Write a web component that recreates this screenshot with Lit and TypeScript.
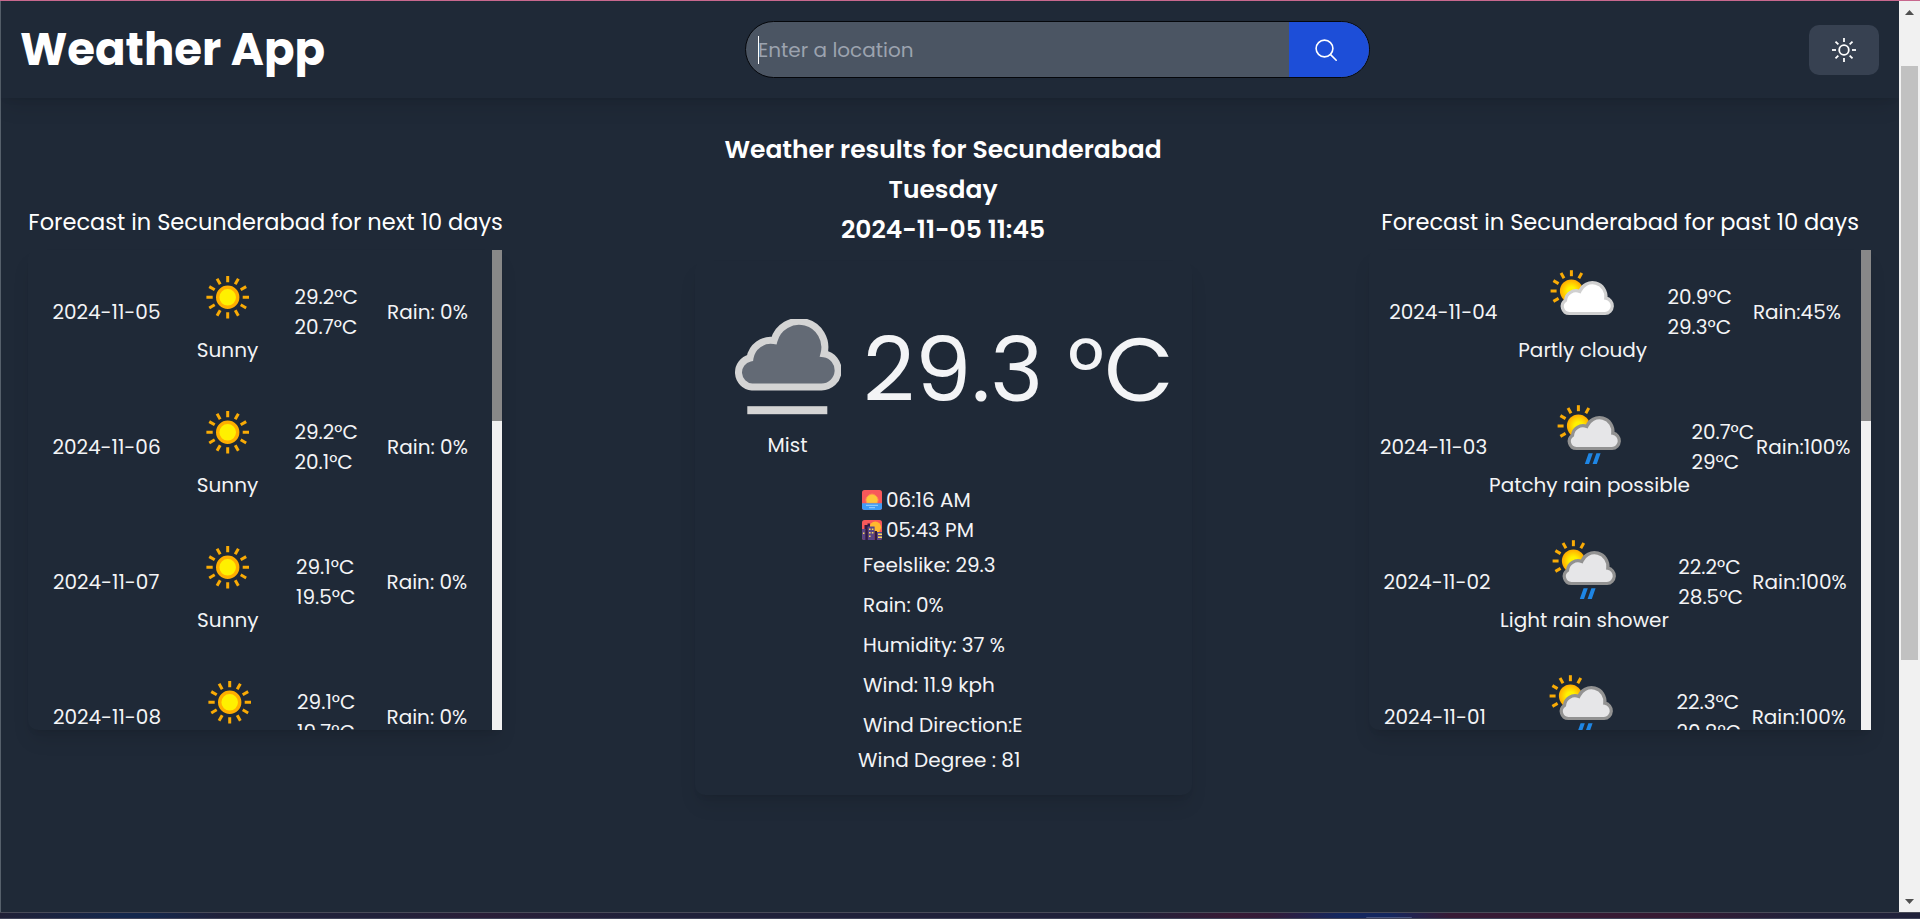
import { LitElement, html, svg, css } from "lit";
import { customElement, property } from "lit/decorators.js";
import { styleMap } from "lit/directives/style-map.js";

interface Day {
  date: string; icon: "sun" | "partly" | "shower"; cond: string; hi: string; lo: string; rain: string;
  x: [number, number, number, number];
}

const NEXT: Day[] = [
  { date: "2024-11-05", icon: "sun", cond: "Sunny", hi: "29.2°C", lo: "20.7°C", rain: "Rain: 0%", x: [24.7, 199.5, 266.8, 359.4] },
  { date: "2024-11-06", icon: "sun", cond: "Sunny", hi: "29.2°C", lo: "20.1°C", rain: "Rain: 0%", x: [24.7, 199.5, 266.8, 359.4] },
  { date: "2024-11-07", icon: "sun", cond: "Sunny", hi: "29.1°C", lo: "19.5°C", rain: "Rain: 0%", x: [25.2, 199.8, 268.3, 358.8] },
  { date: "2024-11-08", icon: "sun", cond: "Sunny", hi: "29.1°C", lo: "19.7°C", rain: "Rain: 0%", x: [25.2, 201.8, 269.4, 358.8] },
];

const PAST: Day[] = [
  { date: "2024-11-04", icon: "partly", cond: "Partly cloudy", hi: "20.9°C", lo: "29.3°C", rain: "Rain:45%", x: [20.6, 213.7, 298.7, 384.2] },
  { date: "2024-11-03", icon: "shower", cond: "Patchy rain possible", hi: "20.7°C", lo: "29°C", rain: "Rain:100%", x: [11.2, 220.5, 322.7, 387.4] },
  { date: "2024-11-02", icon: "shower", cond: "Light rain shower", hi: "22.2°C", lo: "28.5°C", rain: "Rain:100%", x: [14.8, 215.5, 309.6, 383.6] },
  { date: "2024-11-01", icon: "shower", cond: "Light rain shower", hi: "22.3°C", lo: "20.8°C", rain: "Rain:100%", x: [15.3, 212.5, 307.8, 383] },
];

const rays = (cx: number, cy: number, from: number, to: number, angles: number[]) =>
  angles.map((a) => svg`<line x1=${cx} y1=${cy - from} x2=${cx} y2=${cy - to} transform="rotate(${a} ${cx} ${cy})" stroke="#f9ab06" stroke-width="3"/>`);

const CLOUD = "M26.3 56.5A7.2 7.2 0 0 1 22.5 43.3A10.5 10.5 0 0 1 36.8 34.5A13.5 13.5 0 0 1 62.8 41.2A7.7 7.7 0 0 1 62 56.5Z";

const icons = {
  sun: () => html`<svg class="ico" viewBox="0 0 80 80">
    ${rays(39.7, 40.3, 15, 21.3, [0, 30, 60, 90, 120, 150, 180, 210, 240, 270, 300, 330])}
    <circle cx="39.7" cy="40.3" r="10" fill="#fff000" stroke="#ffae00" stroke-width="3.4"/></svg>`,
  cloudy: (fill: string, stroke: string, drops: boolean) => html`<svg class="ico" viewBox="0 0 80 80">
    <defs><radialGradient id="g"><stop offset=".35" stop-color="#fff200"/><stop offset="1" stop-color="#ffab00"/></radialGradient></defs>
    ${rays(28.4, 34, 14.8, 20.8, [-120, -90, -60, -30, 0, 30])}
    <circle cx="28.4" cy="34" r="11.5" fill="url(#g)"/>
    <path d=${CLOUD} fill=${fill} stroke=${stroke} stroke-width="3.2"/>
    ${drops ? svg`<path d="M38.6 61.3h4.2l-3.8 10.7h-4.2zM46.4 61.3h4.2l-3.8 10.7h-4.2z" fill="#1e86e5"/>` : ""}</svg>`,
};

const condIcon = (k: Day["icon"]) =>
  k === "sun" ? icons.sun() : k === "partly" ? icons.cloudy("#fff", "#d0d0d0", false) : icons.cloudy("#e6e6e8", "#929292", true);

@customElement("forecast-list")
class ForecastList extends LitElement {
  @property() heading = "";
  @property({ attribute: false }) days: Day[] = [];
  @property({ type: Number }) indent = 0;

  static styles = css`
    :host { display: flex; flex: none; flex-direction: column; color: #f3f4f6; white-space: nowrap; }
    .head { font-size: 22.5px; line-height: 35px; height: 45px; color: #fff; }
    .box { display: flex; height: 480px; overflow: hidden; border-radius: 10px 0 0 10px;
      box-shadow: 0 12.5px 18.75px -3.75px rgba(0,0,0,.1), 0 5px 7.5px -5px rgba(0,0,0,.1); }
    .rows { flex: 1; overflow: hidden; display: flex; flex-direction: column; gap: 10px; }
    .row { flex: none; height: 125px; display: grid; align-items: center; }
    .row > * { grid-row: 1; grid-column: 1; padding-bottom: 2px; }
    .cond { align-self: start; justify-self: start; width: 0; display: flex; flex-direction: column; align-items: center; padding-top: 7px; }
    .ico { display: block; flex: none; width: 80px; height: 80px; margin-bottom: -2px; }
    .bar { width: 10px; background: #f1f1f1; }
    .thumb { height: 171px; background: #888; }
  `;

  render() {
    const at = (x: number) => styleMap({ marginLeft: x - 0.3 + "px" });
    const centre = (x: number) => styleMap({ marginLeft: x + "px" });
    return html`
      <div class="head" style=${at(this.indent)}>${this.heading}</div>
      <div class="box">
        <div class="rows">
          ${this.days.map((d) => html`<div class="row">
            <div style=${at(d.x[0])}>${d.date}</div>
            <div class="cond" style=${centre(d.x[1])}>${condIcon(d.icon)}<span>${d.cond}</span></div>
            <div style=${at(d.x[2])}>${d.hi}<br>${d.lo}</div>
            <div style=${at(d.x[3])}>${d.rain}</div>
          </div>`)}
        </div>
        <div class="bar"><div class="thumb"></div></div>
      </div>`;
  }
}

@customElement("app-root")
class AppRoot extends LitElement {
  static styles = css`
    * { box-sizing: border-box; }
    :host { box-sizing: border-box; display: flex; flex-direction: column; width: 1920px; height: 919px; overflow: hidden; background: #1f2937; color: #fff; white-space: nowrap;
      font: 400 20px/30px Poppins, Inter, "Open Sans", sans-serif; border-top: 1px solid #c8688e; }
    .view { flex: 1; display: flex; min-height: 0; }
    .page { flex: 1; border-left: 1px solid #56606b; }
    header { height: 97px; display: flex; align-items: center; padding: 0 20px 0 19px; box-shadow: 0 12.5px 18.75px -3.75px rgba(0,0,0,.1), 0 5px 7.5px -5px rgba(0,0,0,.1); }
    h1 { margin: 0; flex: 1; font-size: 45px; line-height: 50px; font-weight: 700; }
    .search { width: 625px; height: 57px; display: flex; border: 1px solid #05070b; border-radius: 29px; overflow: hidden; background: #4b5563; margin-right: 439px; }
    .field { flex: 1; display: flex; align-items: center; padding-left: 12px; color: #9ca3af; }
    .field span { padding-top: 1px; margin-left: -1px; }
    .caret { width: 1px; height: 28px; background: #fff; }
    .go { width: 80px; background: #1d4ed8; display: grid; place-items: center; padding-right: 6px; }
    .mode { width: 70px; height: 50px; border-radius: 10px; background: #374151; display: grid; place-items: center; }
    svg { display: block; flex: none; }
    main { display: flex; align-items: flex-start; padding: 107px 28px 0 27px; }
    .next { width: 474px; }
    .past { width: 502px; margin-left: auto; }
    .now { display: flex; flex-direction: column; margin-top: -75px; margin-left: 192.5px; width: 497px; }
    .title { text-align: center; font-size: 25px; line-height: 40px; font-weight: 600; }
    .card { height: 534px; margin-top: 11px; border-radius: 10px; padding: 47px 0 0 39.5px;
      box-shadow: 0 12.5px 18.75px -3.75px rgba(0,0,0,.1), 0 5px 7.5px -5px rgba(0,0,0,.1); color: #f3f4f6; }
    .top { display: flex; height: 177px; }
    .mist { width: 107px; display: flex; flex-direction: column; align-items: center; padding-top: 11px; gap: 15px; }
    .big { font-size: 90px; line-height: 100px; margin: 12px 0 0 22px; }
    .facts { padding-left: 129px; }
    .sun { display: flex; align-items: center; gap: 4px; margin-left: -1px; height: 30px; }
    .fact { height: 40px; padding-top: 5px; }
    .last { margin-left: -5px; }
    .sb { width: 21px; background: #f1f1f1; display: flex; flex-direction: column; align-items: center; }
    .arrow { width: 21px; height: 21px; }
    .track { flex: 1; width: 17px; padding-top: 44px; }
    .thumb { height: 594px; background: #c1c1c1; }
    .strip { height: 7px; border-top: 1px solid #494b58; border-bottom: 1px solid #42455a; background: linear-gradient(90deg, #202036 0, #14274c 120px, #14274c 150px, #20213a 220px, #21213a 380px, #2a1e38 480px, #20213a 640px, #20213a 1130px, #381a35 1230px, #331b38 1270px, #14275e 1340px, #14275e 1390px, #371a35 1450px, #371a33 1680px, #20213a 1800px, #20213a 1920px); display: flex; align-items: flex-end; }
    .tab { width: 46px; height: 1px; margin-left: 1366px; background: #4b5680; border-radius: 2px 2px 0 0; }
  `;

  render() {
    return html`
      <div class="view">
        <div class="page">
          <header>
            <h1>Weather App</h1>
            <div class="search">
              <div class="field"><div class="caret"></div><span>Enter a location</span></div>
              <div class="go"><svg width="24" height="24" viewBox="0 0 24 24" fill="none" stroke="#fff" stroke-width="1.6" stroke-linecap="round"><circle cx="10.5" cy="10.5" r="8.4"/><path d="M16.6 16.6L22.2 22.2"/></svg></div>
            </div>
            <div class="mode"><svg width="26" height="26" viewBox="0 0 26 26" fill="none" stroke="#fff" stroke-width="1.8"><circle cx="13" cy="13" r="4.8"/>${[0, 45, 90, 135, 180, 225, 270, 315].map((a) => svg`<line x1="13" y1="1" x2="13" y2="5" transform="rotate(${a} 13 13)"/>`)}</svg></div>
          </header>
          <main>
            <forecast-list class="next" .indent=${0.6} .heading=${"Forecast in Secunderabad for next 10 days"} .days=${NEXT}></forecast-list>
            <section class="now">
              <div class="title">
                <div>Weather results for Secunderabad</div>
                <div>Tuesday</div>
                <div>2024-11-05 11:45</div>
              </div>
              <div class="card">
                <div class="top">
                  <div class="mist">
                    <svg width="107" height="96" viewBox="0 0 107 96"><path d="M18 68A14.7 14.7 0 0 1 16 39A21 21 0 0 1 40 21.6A25.6 25.6 0 0 1 90 34.8A16.7 16.7 0 0 1 87.5 68Z" fill="#636a75" stroke="#d4d4d4" stroke-width="7"/><rect x="13.3" y="87.2" width="80" height="8" fill="#d4d4d4"/></svg>
                    <span>Mist</span>
                  </div>
                  <div class="big">29.3 °C</div>
                </div>
                <div class="facts">
                  <div class="sun"><svg width="20" height="20" viewBox="0 0 20 20"><rect width="20" height="20" rx="2.5" fill="#f8595a"/><path d="M5 13.3a5.900 5.900 0 1 1 10 0z" fill="#fdc73a" stroke="#ff8c50" stroke-width="1"/><path d="M0 13.3h20v4.2a2.5 2.5 0 0 1-2.5 2.5h-15a2.5 2.5 0 0 1-2.5-2.5z" fill="#3f9cf5"/><path d="M4 15.300h12M7 17.700h6" stroke="#b8e0ff" stroke-width=".8"/></svg>06:16 AM</div>
                  <div class="sun"><svg width="20" height="20" viewBox="0 0 20 20"><rect width="20" height="20" rx="2.5" fill="#f8595a"/><circle cx="13.300" cy="7.300" r="5.800" fill="#ffb92e"/><path d="M2.500 20V5h3v-1.500h2.500v16.500z" fill="#321b41"/><path d="M0 9h3.600v11h-1.500a2 2 0 0 1-2-2zM5.600 6.500h7V20h-7zM15 12h5v6a2 2 0 0 1-2 2h-3z" fill="#594585"/><path d="M3.600 10h2V20h-2zM12.600 11h2.400v9h-2.400z" fill="#321b41"/><path d="M7 8.500h1.600v1.500h-1.600zM9.800 8.500h1.600v1.500h-1.600zM7 12h1.600v1.500h-1.600zM7 15.500h1.600v1.500h-1.600zM9.800 12h1.600v1.500h-1.600zM1 12.500h1.400v1.500h-1.400zM16 13.500h4v1.500h-4zM16 16.500h4v1.500h-4z" fill="#f9d65c"/></svg>05:43 PM</div>
                  <div class="fact">Feelslike: 29.3</div>
                  <div class="fact">Rain: 0%</div>
                  <div class="fact">Humidity: 37 %</div>
                  <div class="fact">Wind: 11.9 kph</div>
                  <div class="fact">Wind Direction:E</div>
                  <div class="last">Wind Degree : 81</div>
                </div>
              </div>
            </section>
            <forecast-list class="past" .indent=${12.6} .heading=${"Forecast in Secunderabad for past 10 days"} .days=${PAST}></forecast-list>
          </main>
        </div>
        <div class="sb">
          <svg class="arrow" viewBox="0 0 21 21"><path d="M10.500 9L15 14H6z" fill="#505050"/></svg>
          <div class="track"><div class="thumb"></div></div>
          <svg class="arrow" viewBox="0 0 21 21"><path d="M10.500 13L15 8H6z" fill="#505050"/></svg>
        </div>
      </div>
      <div class="strip"><div class="tab"></div></div>`;
  }
}
